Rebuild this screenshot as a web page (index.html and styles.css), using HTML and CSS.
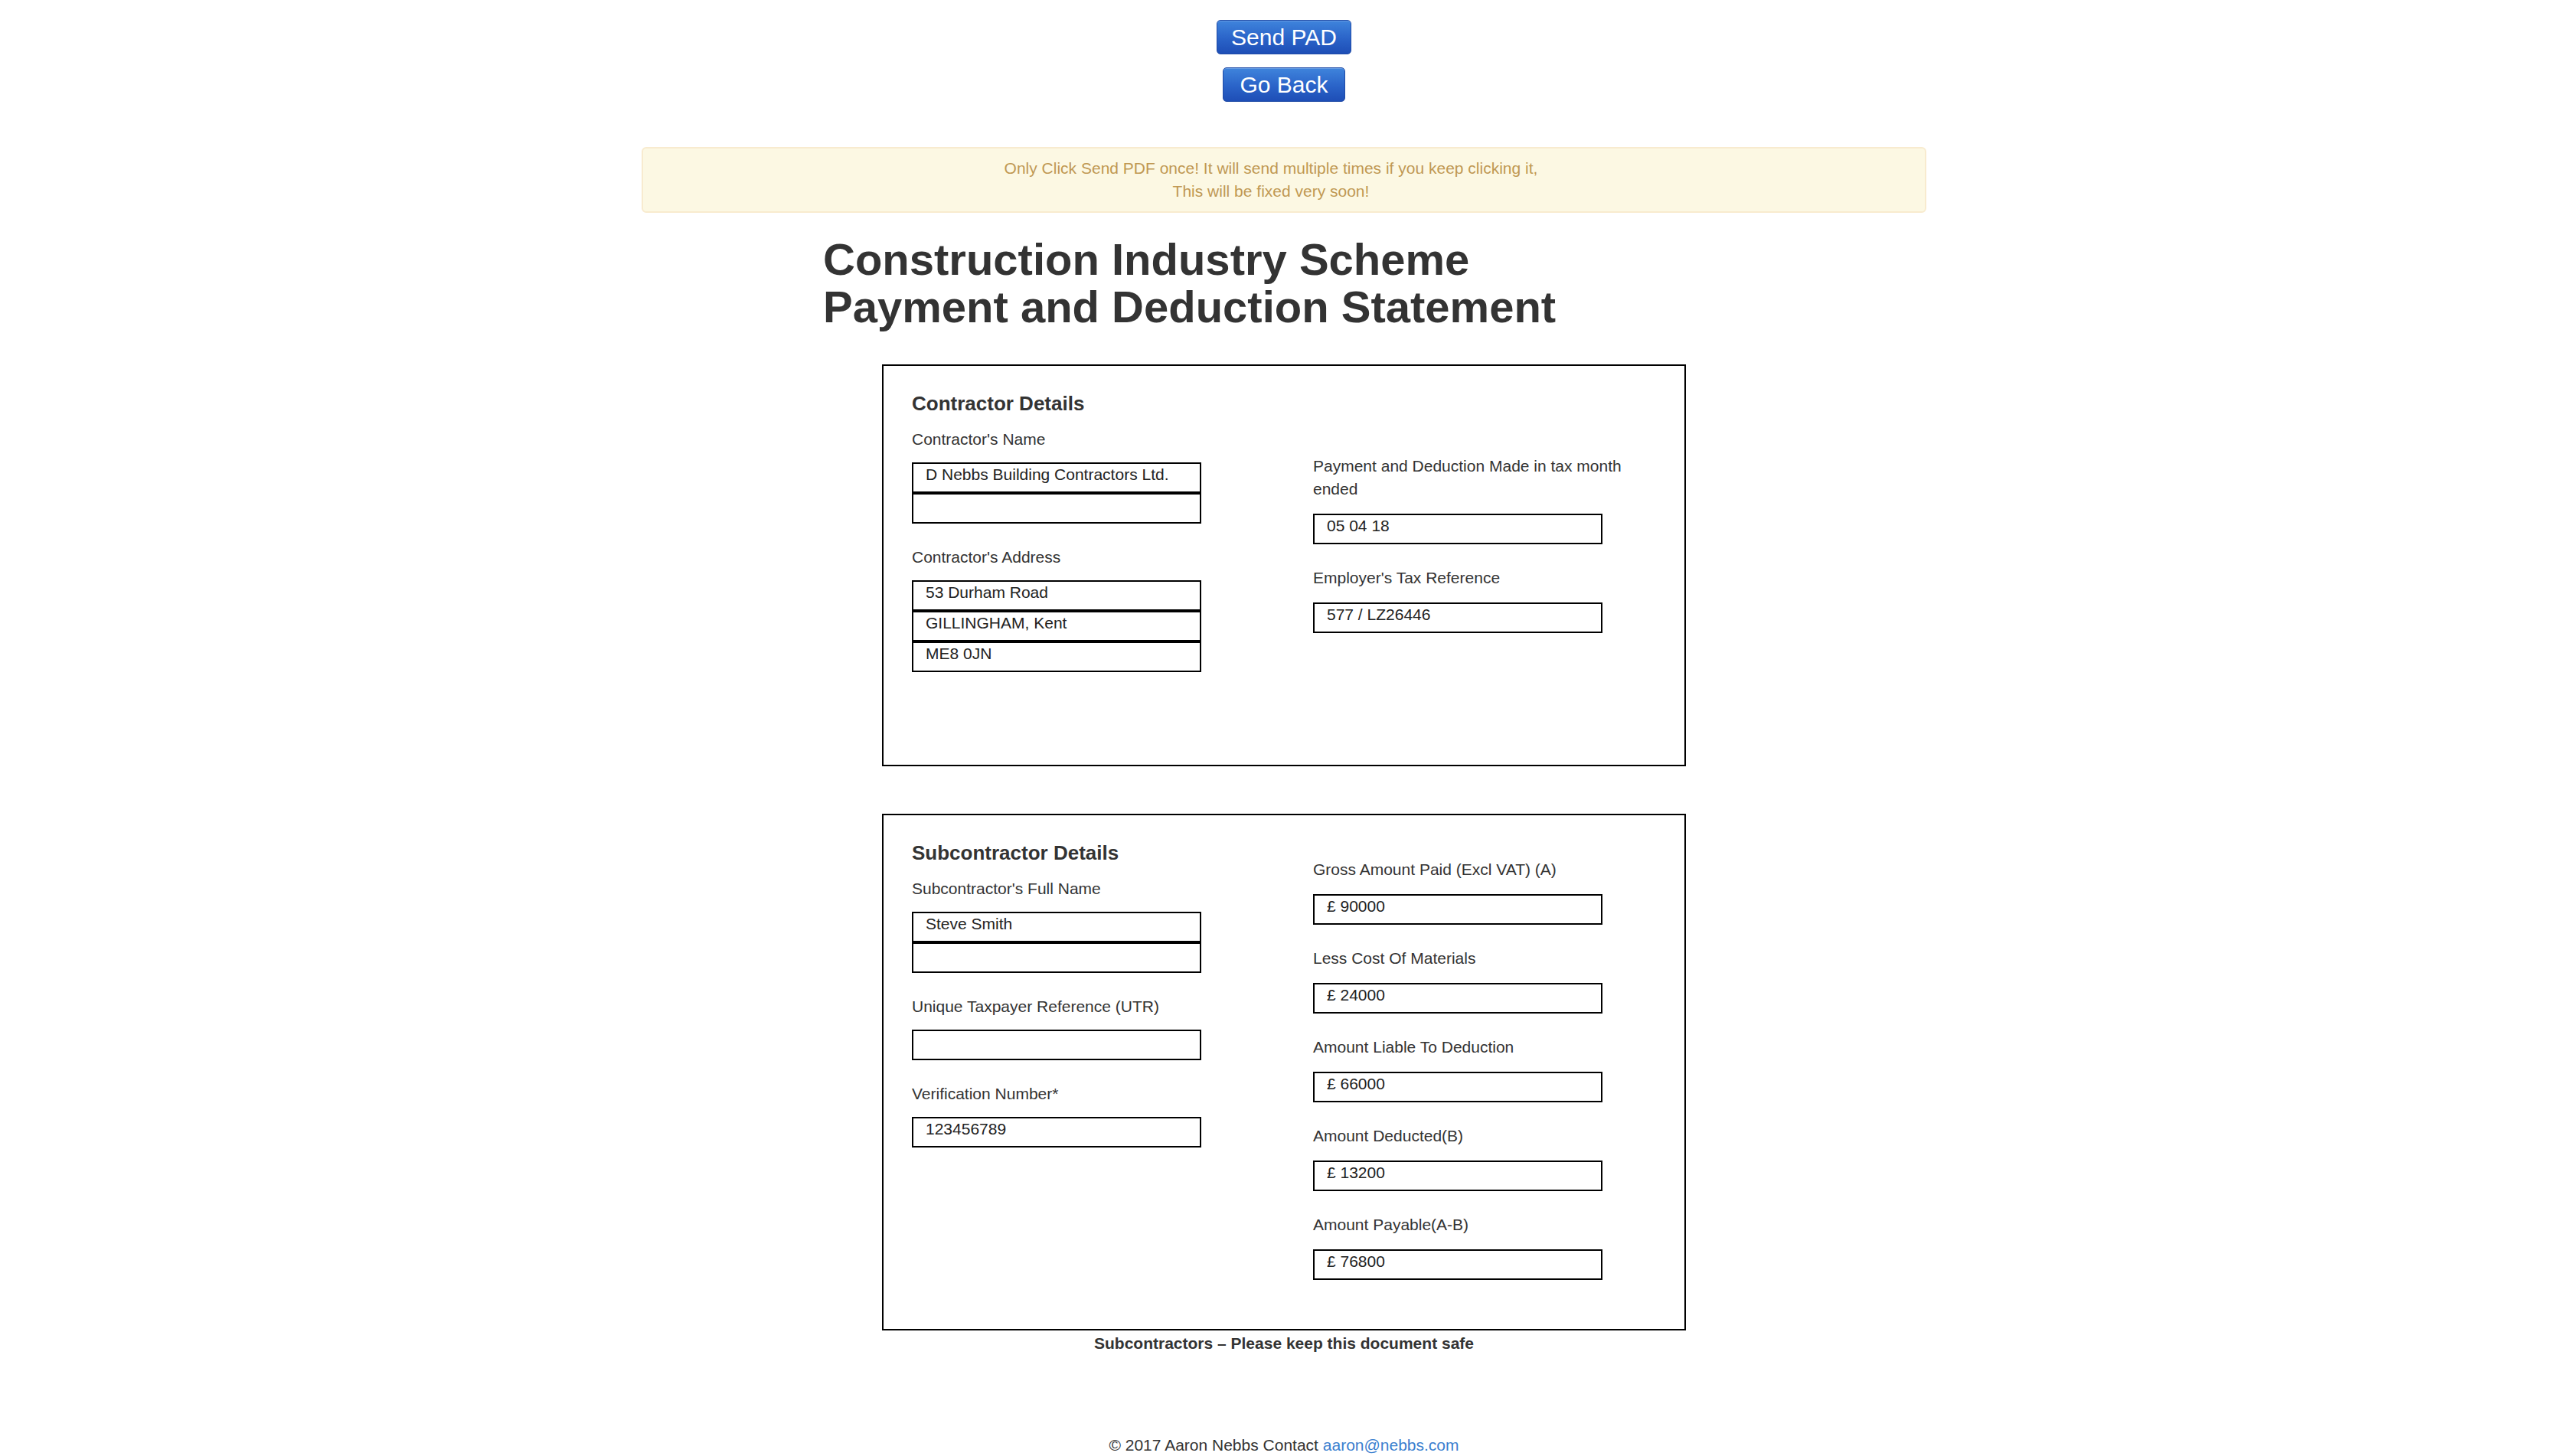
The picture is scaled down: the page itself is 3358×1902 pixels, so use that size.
FILE: index.html
```html
<!DOCTYPE html>
<html lang="en">
<head>
<meta charset="utf-8">
<title>CIS Payment and Deduction Statement</title>
<link rel="stylesheet" href="styles.css">
</head>
<body>
  <div class="actions">
    <button class="btn btn--send" type="button">Send PAD</button>
    <button class="btn btn--back" type="button">Go Back</button>
  </div>

  <div class="alert">Only Click Send PDF once! It will send multiple times if you keep clicking it,<br>This will be fixed very soon!</div>

  <div class="title-wrap">
    <h1 class="title">Construction Industry Scheme<br>Payment and Deduction Statement</h1>
  </div>

  <section class="form-box form-box--contractor">
    <div class="col col--left">
      <h4 class="section-title">Contractor Details</h4>
      <div class="field">
        <div class="label">Contractor's Name</div>
        <input class="input" type="text" value="D Nebbs Building Contractors Ltd." readonly>
        <input class="input" type="text" value="" readonly>
      </div>
      <div class="field">
        <div class="label">Contractor's Address</div>
        <input class="input" type="text" value="53 Durham Road" readonly>
        <input class="input" type="text" value="GILLINGHAM, Kent" readonly>
        <input class="input" type="text" value="ME8 0JN" readonly>
      </div>
    </div>
    <div class="col col--right col--right-contractor">
      <div class="field">
        <div class="label">Payment and Deduction Made in tax month ended</div>
        <input class="input" type="text" value="05 04 18" readonly>
      </div>
      <div class="field">
        <div class="label">Employer's Tax Reference</div>
        <input class="input" type="text" value="577 / LZ26446" readonly>
      </div>
    </div>
  </section>

  <section class="form-box form-box--sub">
    <div class="col col--left">
      <h4 class="section-title">Subcontractor Details</h4>
      <div class="field">
        <div class="label">Subcontractor's Full Name</div>
        <input class="input" type="text" value="Steve Smith" readonly>
        <input class="input" type="text" value="" readonly>
      </div>
      <div class="field">
        <div class="label">Unique Taxpayer Reference (UTR)</div>
        <input class="input" type="text" value="" readonly>
      </div>
      <div class="field">
        <div class="label">Verification Number*</div>
        <input class="input" type="text" value="123456789" readonly>
      </div>
    </div>
    <div class="col col--right col--right-sub">
      <div class="field">
        <div class="label">Gross Amount Paid (Excl VAT) (A)</div>
        <input class="input" type="text" value="£ 90000" readonly>
      </div>
      <div class="field">
        <div class="label">Less Cost Of Materials</div>
        <input class="input" type="text" value="£ 24000" readonly>
      </div>
      <div class="field">
        <div class="label">Amount Liable To Deduction</div>
        <input class="input" type="text" value="£ 66000" readonly>
      </div>
      <div class="field">
        <div class="label">Amount Deducted(B)</div>
        <input class="input" type="text" value="£ 13200" readonly>
      </div>
      <div class="field">
        <div class="label">Amount Payable(A-B)</div>
        <input class="input" type="text" value="£ 76800" readonly>
      </div>
    </div>
  </section>

  <p class="keep-safe">Subcontractors – Please keep this document safe</p>

  <footer class="footer">© 2017 Aaron Nebbs Contact <a class="footer-link" href="#">aaron@nebbs.com</a></footer>
</body>
</html>
```

FILE: styles.css
```css
* {
  box-sizing: border-box;
}

html, body {
  margin: 0;
  padding: 0;
  background: #fff;
}

body {
  padding-right: 4px;
  font-family: "Liberation Sans", Arial, Helvetica, sans-serif;
  color: #333;
  font-size: 21px;
  line-height: 30px;
}

.actions {
  display: flex;
  flex-direction: column;
  align-items: center;
  gap: 17px;
  padding-top: 26px;
}

.btn {
  font-family: "Liberation Sans", Arial, Helvetica, sans-serif;
  font-size: 30px;
  line-height: 34px;
  height: 45px;
  padding: 0 18px;
  color: #fff;
  border: 1px solid #1f4aa6;
  border-radius: 5px;
  background: linear-gradient(to bottom, #3f84dc 0%, #2a63c8 55%, #1e4eb6 100%);
  box-shadow: inset 0 1px 0 rgba(255, 255, 255, 0.2);
  cursor: pointer;
}

.btn--back {
  padding: 0 21px;
}

.alert {
  width: 1678px;
  margin: 59px auto 0;
  padding: 11px 56px 11px 22px;
  border: 2px solid #f8ebcf;
  border-radius: 6px;
  background: #fcf8e3;
  color: #c09853;
  text-align: center;
  font-size: 21px;
  line-height: 30px;
}

.title-wrap {
  width: 1204px;
  margin: 30px auto 0;
}

.title {
  margin: 0;
  font-size: 58px;
  line-height: 62px;
  font-weight: bold;
  color: #333;
}

.form-box {
  width: 1050px;
  margin: 44px auto 0;
  border: 2px solid #000;
  display: grid;
  grid-template-columns: 1fr 1fr;
  align-items: start;
}

.form-box--contractor {
  height: 525px;
}

.form-box--sub {
  height: 675px;
  margin-top: 62px;
}

.col {
  padding: 0 37px 0 37px;
}

.col--left {
  padding-top: 34px;
}

.col--right {
  padding-left: 38px;
}

.col--right-contractor {
  padding-top: 116px;
}

.col--right-sub {
  padding-top: 56px;
}

.section-title {
  margin: 0 0 17px;
  font-size: 26px;
  line-height: 30px;
  font-weight: bold;
  color: #333;
}

.field {
  margin-bottom: 29px;
}

.label {
  font-size: 21px;
  line-height: 30px;
  margin-bottom: 15px;
  color: #333;
}

.col--right .label {
  margin-bottom: 17px;
}

.input {
  display: block;
  width: 378px;
  height: 40px;
  margin: 0;
  padding: 0 0 8px 16px;
  border: 2px solid #000;
  border-radius: 0;
  background: #fff;
  font-family: "Liberation Sans", Arial, Helvetica, sans-serif;
  font-size: 21px;
  color: #222;
  outline: none;
}

.keep-safe {
  margin: 2px 0 0;
  text-align: center;
  font-weight: bold;
  font-size: 21px;
  line-height: 30px;
  color: #333;
}

.footer {
  margin-top: 103px;
  text-align: center;
  font-size: 21px;
  line-height: 30px;
  color: #333;
}

.footer-link {
  color: #3a80cf;
  text-decoration: none;
}
```
